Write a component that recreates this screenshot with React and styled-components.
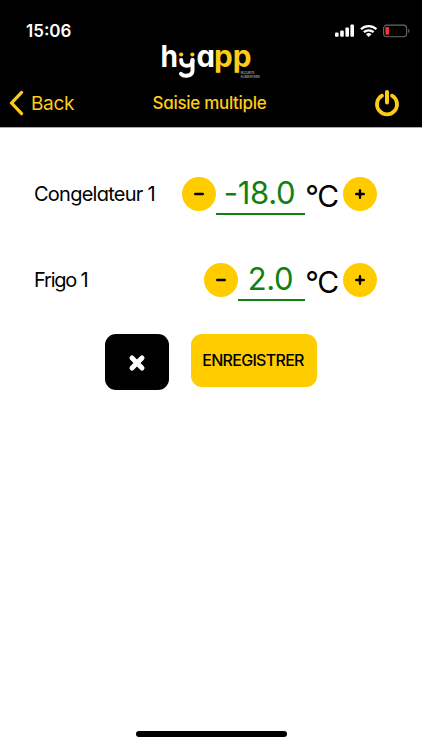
import React, { useState } from 'react'
import styled, { createGlobalStyle } from 'styled-components'

function App() {
    const [temps, setTemps] = useState([
        { id: 1, name: 'Congelateur 1', value: -18, width: 89, gap: -0.75 },
        { id: 2, name: 'Frigo 1', value: 2, width: 67, gap: -1.2 },
    ])

    const changeTemp = (id, step) => {
        setTemps(temps.map((t) => (t.id === id ? { ...t, value: t.value + step } : t)))
    }

    return (
        <Screen>
            <GlobalStyle />
            <Header>
                {/* STATUS BAR */}
                <StatusBar>
                    <Clock>15:06</Clock>
                    <StatusIcons />
                </StatusBar>
                <LogoBlock>
                    <Logo />
                </LogoBlock>
                {/* NAVIGATION */}
                <NavBar>
                    <BackButton>
                        <svg width="15" height="26" viewBox="0 0 15 26">
                            <path d="M12.6 2.4 2.6 13l10 10.6" fill="none" stroke="currentColor" strokeWidth="3.2" strokeLinecap="round" strokeLinejoin="miter" />
                        </svg>
                        <span>Back</span>
                    </BackButton>
                    <Title>Saisie multiple</Title>
                    <PowerButton aria-label="Power">
                        <svg width="26" height="28" viewBox="0 0 26 28">
                            <path d="M8 6.7a10 10 0 1 0 10 0" fill="none" stroke="currentColor" strokeWidth="3.8" strokeLinecap="round" />
                            <path d="M13 3v10.4" stroke="currentColor" strokeWidth="4" strokeLinecap="round" />
                        </svg>
                    </PowerButton>
                </NavBar>
            </Header>
            {/* CONTENT */}
            <Content>
                {temps.map((t) => (
                    <TempRow key={t.id}>
                        <TempName $spacing={t.gap}>{t.name}</TempName>
                        <RoundButton aria-label="-" onClick={() => changeTemp(t.id, -1)}>
                            <svg width="10" height="10" viewBox="0 0 10 10">
                                <path d="M1.2 5h7.6" stroke="#000" strokeWidth="2.4" strokeLinecap="round" />
                            </svg>
                        </RoundButton>
                        <TempValue $width={t.width}>{t.value.toFixed(1)}</TempValue>
                        <Unit>°C</Unit>
                        <RoundButton aria-label="+" onClick={() => changeTemp(t.id, 1)}>
                            <svg width="10" height="10" viewBox="0 0 10 10">
                                <path d="M1.2 5h7.6M5 1.2v7.6" stroke="#000" strokeWidth="2.4" strokeLinecap="round" />
                            </svg>
                        </RoundButton>
                    </TempRow>
                ))}
                <Actions>
                    <CancelButton aria-label="Annuler">
                        <svg width="18" height="18" viewBox="0 0 18 18">
                            <path d="m4 4 10 10M14 4 4 14" stroke="#fff" strokeWidth="5" strokeLinecap="round" />
                        </svg>
                    </CancelButton>
                    <SaveButton>ENREGISTRER</SaveButton>
                </Actions>
            </Content>
            <HomeIndicator />
        </Screen>
    )
}

function StatusIcons() {
    return (
        <svg width="76" height="16" viewBox="0 0 76 16">
            <g fill="#fff">
                <rect x="1" y="9.6" width="3.6" height="4.2" rx="1" />
                <rect x="6.2" y="7.4" width="3.6" height="6.4" rx="1" />
                <rect x="11.4" y="4.6" width="3.6" height="9.2" rx="1" />
                <rect x="16.4" y="1.6" width="3.6" height="12.2" rx="1" />
            </g>
            <g fill="none" stroke="#fff" strokeWidth="2.3">
                <path d="M27 6.1a11.2 11.2 0 0 1 15.4 0" />
                <path d="M29.8 9.2a7.2 7.2 0 0 1 9.8 0" />
            </g>
            <path d="M34.7 14.1 31.9 11.3a4 4 0 0 1 5.6 0z" fill="#fff" />
            <rect x="49.6" y="2.1" width="23" height="11.6" rx="3.2" fill="none" stroke="#69696b" strokeWidth="1.1" />
            <rect x="51.4" y="4" width="3.6" height="7.8" rx="1.2" fill="#f5342f" />
            <path d="M74.2 6v4a2.2 2.2 0 0 0 0-4z" fill="#69696b" />
        </svg>
    )
}

function Logo() {
    return (
        <LogoSvg width="102" height="38" viewBox="0 0 102 38">
            <g fill="#fff">
                <text x="0.6" y="25" textLength="17.5" lengthAdjust="spacingAndGlyphs">h</text>
                <text x="36.5" y="25" textLength="18.5" lengthAdjust="spacingAndGlyphs">a</text>
            </g>
            {/* smiling y */}
            <g fill="none" stroke="#fff" strokeWidth="4" strokeLinecap="round">
                <path d="M21.2 18v.4c0 7.2 11.3 7.2 11.3 0V18" />
                <path d="M32.5 18v10.5c0 6-8.5 6.4-11.5 3.3" />
            </g>
            <g fill="#fdcc18">
                <circle cx="21.2" cy="12.5" r="2.1" />
                <circle cx="32.4" cy="12.5" r="2.1" />
                <text x="54" y="25" textLength="37.5" lengthAdjust="spacingAndGlyphs">pp</text>
            </g>
            <g className="baseline" fill="#d8d8d8">
                <text x="80.5" y="31.8" textLength="14" lengthAdjust="spacingAndGlyphs">SÉCURITÉ</text>
                <text x="80.5" y="36" textLength="19.5" lengthAdjust="spacingAndGlyphs">ALIMENTAIRE</text>
            </g>
        </LogoSvg>
    )
}

export default App

const GlobalStyle = createGlobalStyle`
    * {
        box-sizing: border-box;
    }
    body {
        margin: 0;
        background-color: #fff;
        font-family: Inter, 'Liberation Sans', sans-serif;
    }
    button {
        padding: 0;
        border: none;
        background: none;
        font-family: inherit;
        cursor: pointer;
    }
    svg {
        display: block;
        flex-shrink: 0;
    }
`

const Screen = styled.div`
    display: flex;
    flex-direction: column;
    width: 422px;
    height: 750px;
    overflow: hidden;
    background-color: #fff;
`

//HEADER
const Header = styled.header`
    height: 128px;
    background-color: #000;
    border-bottom: 1px solid #aaa;
`

const StatusBar = styled.div`
    display: flex;
    justify-content: space-between;
    align-items: flex-end;
    height: 39px;
    padding: 0 12px 0 26px;
`

const Clock = styled.span`
    font-size: 17px;
    line-height: 15px;
    font-weight: 600;
    color: #fff;
`

const LogoBlock = styled.div`
    display: flex;
    justify-content: center;
    height: 45px;
    padding-top: 3px;
`

const LogoSvg = styled.svg`
    overflow: visible;
    font-family: Inter, sans-serif;
    font-size: 30px;
    font-weight: 700;
    font-feature-settings: 'cv11';

    .baseline {
        font-size: 4px;
        font-weight: 400;
    }
`

const NavBar = styled.div`
    display: grid;
    grid-template-columns: 1fr auto 1fr;
    align-items: center;
    height: 38px;
    padding: 0 22px 0 9px;
`

const BackButton = styled.button`
    display: flex;
    align-items: center;
    gap: 7px;
    font-size: 19px;
    line-height: 24px;
    letter-spacing: -0.35px;
    color: #fdcc18;

    span {
        padding-top: 2px;
    }
`

const Title = styled.h1`
    margin: 0 -5px 0 5px;
    font-size: 17px;
    line-height: 24px;
    font-weight: 500;
    letter-spacing: -0.3px;
    font-feature-settings: 'cv11';
    color: #fdcc18;
`

const PowerButton = styled.button`
    justify-self: end;
    color: #fdcc18;
`

//CONTENT
const Content = styled.main`
    display: flex;
    flex-direction: column;
    flex: 1;
    padding-top: 32px;
`

const TempRow = styled.div`
    display: flex;
    align-items: center;
    height: 68px;
    margin-bottom: 18px;
    padding: 0 45px 0 34px;
`

const TempName = styled.span`
    flex: 1;
    height: 23px;
    overflow: hidden;
    font-size: 20px;
    line-height: 23px;
    letter-spacing: ${(props) => props.$spacing}px;
    white-space: nowrap;
    font-feature-settings: 'cv11';
    color: #000;
`

const RoundButton = styled.button`
    display: flex;
    align-items: center;
    justify-content: center;
    width: 34px;
    height: 34px;
    border-radius: 50%;
    background-color: #fc0;
`

const TempValue = styled.span`
    width: ${(props) => props.$width}px;
    height: 42px;
    padding-right: 2px;
    border-bottom: 2px solid #118011;
    font-size: 31px;
    line-height: 40px;
    text-align: center;
    letter-spacing: -0.3px;
    color: #118011;
`

const Unit = styled.span`
    width: 38px;
    padding-top: 4px;
    font-size: 30px;
    line-height: 36px;
    text-align: center;
    letter-spacing: -1.4px;
    text-indent: -5px;
    color: #000;
`

const Actions = styled.div`
    display: flex;
    align-items: flex-start;
    justify-content: center;
    gap: 22px;
    margin-top: 2px;
`

const CancelButton = styled.button`
    display: flex;
    align-items: center;
    justify-content: center;
    width: 64px;
    height: 56px;
    padding-top: 2px;
    border-radius: 11px;
    background-color: #000;
`

const SaveButton = styled.button`
    width: 126px;
    height: 53px;
    padding: 0 2px 1px 0;
    border-radius: 11px;
    background-color: #fc0;
    font-size: 16px;
    font-weight: 500;
    letter-spacing: -0.7px;
    color: #000;
`

const HomeIndicator = styled.div`
    align-self: center;
    width: 151px;
    height: 6px;
    margin-bottom: 13px;
    border-radius: 3px;
    background-color: #000;
`
